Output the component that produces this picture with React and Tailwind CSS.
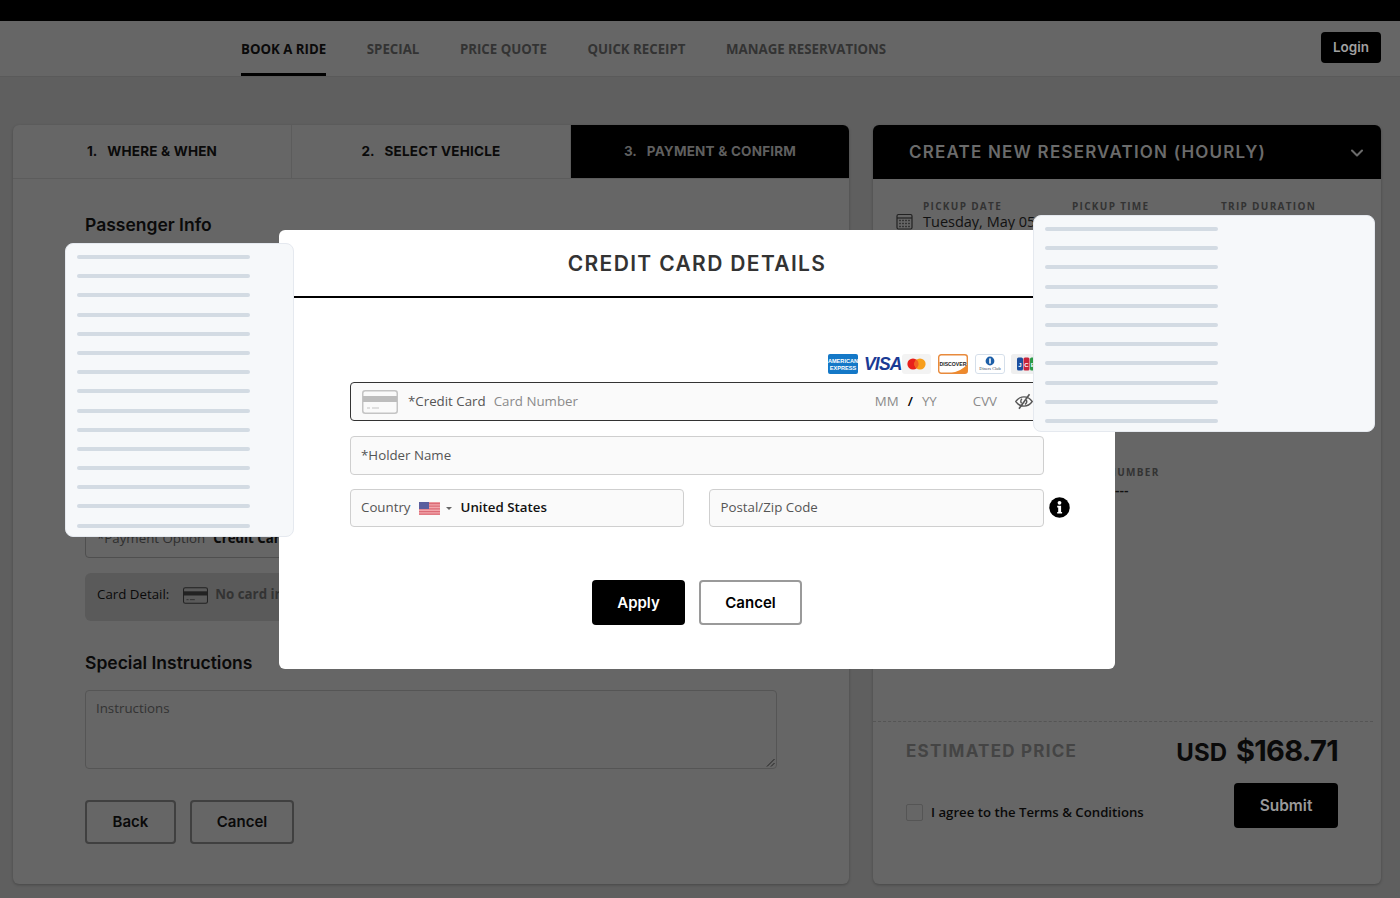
import React from "react";
import { ChevronDown } from "lucide-react";

const mont = "font-['Inter',sans-serif]";
const open = "font-['Open_Sans',sans-serif]";

function Skeleton({ count, className }) {
  return (
    <div className={`absolute z-20 flex flex-col gap-[15.2px] rounded-lg border border-[#e5e9ef] bg-[#f6f8fa] px-[11px] pt-[11px] ${className}`}>
      {Array.from({ length: count }).map((_, i) => (
        <div key={i} className="h-1 w-[173px] shrink-0 rounded-full bg-[#d3dbe3]" />
      ))}
    </div>
  );
}

function CalendarIcon() {
  return (
    <svg width="17" height="17" viewBox="0 0 17 17" fill="none" stroke="#222" strokeWidth="1.2">
      <rect x="1" y="1.5" width="15" height="14.5" rx="1.5" />
      <path d="M1 5h15" />
      {[4, 7, 10, 13].map((x) => [7.5, 10.5, 13.5].map((y) => <rect key={`${x}${y}`} x={x - 0.7} y={y - 0.7} width="1.4" height="1.4" fill="#222" stroke="none" />))}
    </svg>
  );
}

function CardIcon({ stroke, bar, w = 36, h = 24 }) {
  return (
    <svg width={w} height={h} viewBox="0 0 36 24" fill="none" className="shrink-0">
      <rect x="0.75" y="0.75" width="34.5" height="22.5" rx="2.5" fill="none" stroke={stroke} strokeWidth="1.5" />
      <rect x="1" y="6" width="34" height="6" fill={bar} />
      <path d="M5 18h3M10 18h7" stroke={stroke} strokeWidth="1" />
    </svg>
  );
}

function EyeSlash() {
  return (
    <svg width="18" height="17" viewBox="0 0 18 17" fill="none" stroke="#555" strokeWidth="1.4" className="ml-[18px] shrink-0">
      <path d="M0.8 8.5C3 5.4 5.8 3.9 9 3.9s6 1.5 8.2 4.6C15 11.6 12.2 13.1 9 13.1S3 11.6 0.8 8.5z" />
      <path d="M7 5.8a3.2 3.2 0 0 0-.4 4.6M11.4 7a3.2 3.2 0 0 1-1.5 4.4" />
      <path d="M14.5 1.2 4 15.8" strokeWidth="1.6" />
    </svg>
  );
}

function InfoDot() {
  return (
    <svg width="21" height="21" viewBox="0 0 21 21" className="absolute top-[8px] -right-[26px]">
      <circle cx="10.5" cy="10.5" r="10.2" fill="#000" />
      <circle cx="10.5" cy="5.8" r="1.9" fill="#fff" />
      <path d="M8.2 8.8h3.9v6.2h1v1.6H8.2V15h1v-4.6h-1z" fill="#fff" />
    </svg>
  );
}

function CardLogos() {
  return (
    <div className="flex h-[22px] items-center justify-end pr-[3px]">
      <svg width="30" height="20" viewBox="0 0 30 20" className="rounded-[2px]">
        <rect width="30" height="20" fill="#1478c7" />
        <text x="15" y="8.5" textAnchor="middle" fontSize="5.6" fontWeight="700" fill="#fff" fontFamily="Liberation Sans">AMERICAN</text>
        <text x="15" y="16" textAnchor="middle" fontSize="5.6" fontWeight="700" fill="#fff" fontFamily="Liberation Sans">EXPRESS</text>
      </svg>
      <span className="ml-[6px] w-[38px] font-['Liberation_Sans',sans-serif] text-[17.5px] leading-5 font-bold tracking-[-0.8px] text-[#1a3a94] italic">VISA</span>
      <svg width="29" height="20" viewBox="0 0 29 20" className="rounded-[3px]">
        <rect width="29" height="20" fill="#f3f3f3" />
        <circle cx="11" cy="10" r="5.6" fill="#e8201b" />
        <circle cx="18" cy="10" r="5.6" fill="#f79e1b" />
        <path d="M14.5 5.6a5.6 5.6 0 0 1 0 8.8a5.6 5.6 0 0 1 0-8.8z" fill="#f26122" />
      </svg>
      <svg width="30" height="20" viewBox="0 0 30 20" className="ml-[7px]">
        <rect x="0.7" y="0.7" width="28.6" height="18.6" rx="2.5" fill="#fff" stroke="#e88a3c" strokeWidth="1.4" />
        <path d="M13 19.3c7-1.5 12-4.5 16.3-8.5v6a2.5 2.5 0 0 1-2.5 2.5z" fill="#ee8a2c" />
        <text x="15" y="12" textAnchor="middle" fontSize="5.2" fontWeight="700" fill="#222" fontFamily="Liberation Sans">DISCOVER</text>
      </svg>
      <svg width="30" height="20" viewBox="0 0 30 20" className="ml-[7px]">
        <rect x="0.5" y="0.5" width="29" height="19" rx="2.5" fill="#fff" stroke="#d5dfea" />
        <circle cx="15" cy="7" r="4.4" fill="#1d5fa8" />
        <rect x="14.2" y="4.4" width="1.6" height="5.2" fill="#fff" />
        <text x="15" y="15.5" textAnchor="middle" fontSize="4.4" fill="#345" fontFamily="Liberation Serif">Diners Club</text>
      </svg>
      <svg width="30" height="20" viewBox="0 0 30 20" className="ml-[6px]">
        <rect width="30" height="20" rx="2.5" fill="#efefef" />
        <rect x="6" y="3.5" width="6" height="13" rx="1.5" fill="#1d4f9e" />
        <rect x="12.5" y="3.5" width="6" height="13" rx="1.5" fill="#c8233a" />
        <rect x="19" y="3.5" width="6" height="13" rx="1.5" fill="#2b9a46" />
        <text x="9" y="12.5" textAnchor="middle" fontSize="6" fontWeight="700" fill="#fff" fontFamily="Liberation Sans">J</text>
        <text x="15.5" y="12.5" textAnchor="middle" fontSize="6" fontWeight="700" fill="#fff" fontFamily="Liberation Sans">C</text>
        <text x="22" y="12.5" textAnchor="middle" fontSize="6" fontWeight="700" fill="#fff" fontFamily="Liberation Sans">B</text>
      </svg>
    </div>
  );
}

function UsFlag() {
  return (
    <svg width="21" height="13" viewBox="0 0 21 13">
      <rect width="21" height="13" fill="#f2a8ae" />
      <path d="M0 1.5h21M0 4.2h21M0 6.9h21M0 9.6h21M0 12.2h21" stroke="#dc6b76" strokeWidth="1.3" />
      <rect width="10" height="7" fill="#5b5f9e" />
    </svg>
  );
}

function Tab({ num, label, active, border }) {
  return (
    <div className={`flex h-[53px] flex-1 items-center justify-center gap-[10px] text-[13.5px] font-bold ${mont} ${active ? "bg-black text-[#5f5f5f]" : "text-[#0a0a0a]"} ${border ? "border-r border-[#5c5c5c]" : ""}`}>
      <span>{num}</span>
      <span className="tracking-[0.2px]">{label}</span>
    </div>
  );
}

export default function App() {
  const navs = ["SPECIAL", "PRICE QUOTE", "QUICK RECEIPT", "MANAGE RESERVATIONS"];
  return (
    <div className={`relative h-[898px] w-[1400px] overflow-hidden bg-[#5f5f5f] ${open}`}>
      <div className="h-[21px] bg-black" />
      <header className="flex h-[56px] items-stretch border-b border-[#5a5a5a] bg-[#666666] pr-[19px] pl-[241px]">
        <nav className="flex flex-1 gap-[40.6px] text-[13.25px] font-bold">
          <div className="flex items-center border-b-[3px] border-black pt-[5px] text-[#0a0a0a]">BOOK A RIDE</div>
          {navs.map((n) => (
            <div key={n} className="flex items-center pt-[2px] text-[#333333]">{n}</div>
          ))}
        </nav>
        <div className="flex items-center pb-[2px]">
          <div className={`flex h-[31px] w-[60px] items-center justify-center rounded bg-black text-[13.5px] font-semibold text-[#a0a0a0] ${mont}`}>Login</div>
        </div>
      </header>

      <main className="flex gap-6 px-[13px] pt-[48px] pr-[19px]">
        <section className="flex h-[759px] w-[836px] flex-col rounded-md bg-[#666666] shadow-[0_1px_3px_rgba(0,0,0,0.25)]">
          <div className="flex overflow-hidden rounded-t-md border-b border-[#5c5c5c]">
            <Tab num="1." label="WHERE & WHEN" border />
            <Tab num="2." label="SELECT VEHICLE" border />
            <Tab num="3." label="PAYMENT & CONFIRM" active />
          </div>
          <div className="flex flex-col pt-[35px] pr-[72px] pl-[72px]">
            <h2 className={`text-[17.5px] leading-[22px] font-semibold text-[#0a0a0a] ${mont}`}>Passenger Info</h2>
            <div className="mt-[284px] flex h-[38px] items-end overflow-hidden rounded border border-[#4f4f4f] px-[11px] pb-[8px] text-[13.3px]">
              <span className="text-[#2e2e2e]">*Payment Option</span>
              <span className="ml-2 font-bold text-[#0a0a0a]">Credit Card</span>
            </div>
            <div className="mt-[15px] flex h-[48px] items-center gap-[14px] rounded-md bg-[#5a5a5a] px-3 pb-[4px] text-[13.3px]">
              <span className="text-[#0a0a0a]">Card Detail:</span>
              <CardIcon stroke="#222222" bar="#222222" w={25} h={17} />
              <span className="-ml-[7px] font-bold text-[#333333]">No card information</span>
            </div>
            <h2 className={`mt-[31px] text-[17.5px] leading-[22px] font-semibold text-[#0a0a0a] ${mont}`}>Special Instructions</h2>
            <div className="relative mt-[16px] h-[79px] rounded border border-[#555555] px-[10px] py-[8px] text-[13.3px] text-[#333333]">
              Instructions
              <svg width="9" height="9" viewBox="0 0 9 9" className="absolute right-[1px] bottom-[1px]" stroke="#222">
                <path d="M1 8.5 8.5 1M5 8.5 8.5 5" />
              </svg>
            </div>
            <div className={`mt-[31px] flex gap-[14px] text-[15px] font-semibold text-[#0a0a0a] ${mont}`}>
              <div className="flex h-[44px] w-[91px] items-center justify-center rounded border-2 border-[#404040]">Back</div>
              <div className="flex h-[44px] w-[104px] items-center justify-center rounded border-2 border-[#404040]">Cancel</div>
            </div>
          </div>
        </section>

        <section className="flex h-[759px] w-[508px] flex-col rounded-md bg-[#666666] shadow-[0_1px_3px_rgba(0,0,0,0.25)]">
          <div className={`flex h-[54px] items-center justify-between rounded-t-md bg-black pt-[2px] pr-[14px] pl-[36px] text-[17px] font-semibold tracking-[1.2px] text-[#6b6b6b] ${mont}`}>
            <span>CREATE NEW RESERVATION (HOURLY)</span>
            <ChevronDown size={20} strokeWidth={2.5} />
          </div>
          <div className="flex pt-[21px] pl-[23px]">
            <div className="mt-[13px] mr-[10px]"><CalendarIcon /></div>
            <div className="w-[149px]">
              <div className="text-[10px] leading-[13px] font-bold tracking-[1.3px] text-[#333333]">PICKUP DATE</div>
              <div className="text-[14.5px] leading-[18px] text-[#111111]">Tuesday, May 05</div>
            </div>
            <div className="w-[149px] text-[10px] leading-[13px] font-bold tracking-[1.3px] text-[#333333]">PICKUP TIME</div>
            <div className="text-[10px] leading-[13px] font-bold tracking-[1.3px] text-[#333333]">TRIP DURATION</div>
          </div>
          <div className="mt-[235px] ml-[188px] text-[10px] leading-[13px] font-bold tracking-[1.3px] text-[#333333]">FLIGHT NUMBER</div>
          <div className="mt-[1px] ml-[188px] text-sm leading-[19px] font-semibold text-[#111111]">---------------</div>
          <div className="mt-[222px] mr-2 border-t border-dashed border-[#555555]" />
          <div className="flex items-center justify-between pt-[11px] pr-[43px] pl-[33px]">
            <span className={`text-[17px] font-bold tracking-[1.25px] text-[#444444] ${mont}`}>ESTIMATED PRICE</span>
            <span className={`-mt-[1px] flex items-baseline gap-[9px] font-bold text-[#0a0a0a] ${mont}`}>
              <span className="text-[24px]">USD</span>
              <span className="text-[29px] leading-[38px] tracking-[-0.7px]">$168.71</span>
            </span>
          </div>
          <div className="flex items-start justify-between pt-[12px] pr-[43px] pl-[33px]">
            <div className="flex items-center gap-2 pt-[20px] text-[13.2px] font-semibold text-[#0a0a0a]">
              <span className="h-[17px] w-[17px] rounded-[2px] border border-[#555555]" />
              I agree to the Terms &amp; Conditions
            </div>
            <div className={`flex h-[45px] w-[104px] items-center justify-center rounded bg-black text-[15.5px] font-semibold text-[#999999] ${mont}`}>Submit</div>
          </div>
        </section>
      </main>

      <div className="absolute top-[230px] left-[279px] z-10 h-[439px] w-[836px] rounded-md bg-white">
        <div className={`flex h-[68px] items-center justify-center border-b-2 border-black pt-px text-[21px] font-semibold tracking-[1.35px] text-[#333333] ${mont}`}>
          CREDIT CARD DETAILS
        </div>
        <div className="flex flex-col pt-[55px] pr-[71px] pl-[71px]">
          <CardLogos />
          <div className="mt-[7px] flex h-[39px] items-center rounded border border-[#333333] bg-[#fafafa] pr-[10px] pl-[11px] text-[13.3px]">
            <CardIcon stroke="#c4c4c4" bar="#bdbdbd" />
            <span className="ml-[10px] text-[#555555]">*Credit Card</span>
            <span className="ml-2 text-[#8a8a8a]">Card Number</span>
            <span className="ml-auto text-[#8a8a8a]">MM</span>
            <span className="ml-[9px] font-semibold text-black">/</span>
            <span className="ml-[9px] text-[#8a8a8a]">YY</span>
            <span className="ml-[36px] text-[#8a8a8a]">CVV</span>
            <EyeSlash />
          </div>
          <div className="mt-[15px] flex h-[39px] items-center rounded border border-[#cfcfcf] bg-[#fafafa] px-[10px] text-[13.3px] text-[#555555]">*Holder Name</div>
          <div className="relative mt-[14px] flex gap-[25px]">
            <div className="flex h-[38px] flex-1 items-center rounded border border-[#cfcfcf] bg-[#fafafa] px-[10px] text-[13.3px] text-[#555555]">
              Country
              <span className="ml-2"><UsFlag /></span>
              <span className="ml-[6px] h-0 w-0 border-x-[3px] border-t-[3px] border-x-transparent border-t-[#666666]" />
              <span className="ml-[9px] font-semibold text-[#111111]">United States</span>
            </div>
            <div className="flex h-[38px] flex-1 items-center rounded border border-[#cfcfcf] bg-[#fafafa] px-[11px] text-[13.3px] text-[#555555]">Postal/Zip Code</div>
            <InfoDot />
          </div>
          <div className={`mt-[53px] flex justify-center gap-[14px] text-[15px] font-semibold ${mont}`}>
            <div className="flex h-[45px] w-[93px] items-center justify-center rounded bg-black pt-px text-white">Apply</div>
            <div className="flex h-[45px] w-[103px] items-center justify-center rounded border-2 border-[#9a9a9a] pt-px text-black">Cancel</div>
          </div>
        </div>
      </div>

      <Skeleton count={15} className="top-[243px] left-[65px] h-[294px] w-[229px] overflow-hidden" />
      <Skeleton count={11} className="top-[215px] left-[1033px] h-[217px] w-[342px] overflow-hidden" />
    </div>
  );
}
